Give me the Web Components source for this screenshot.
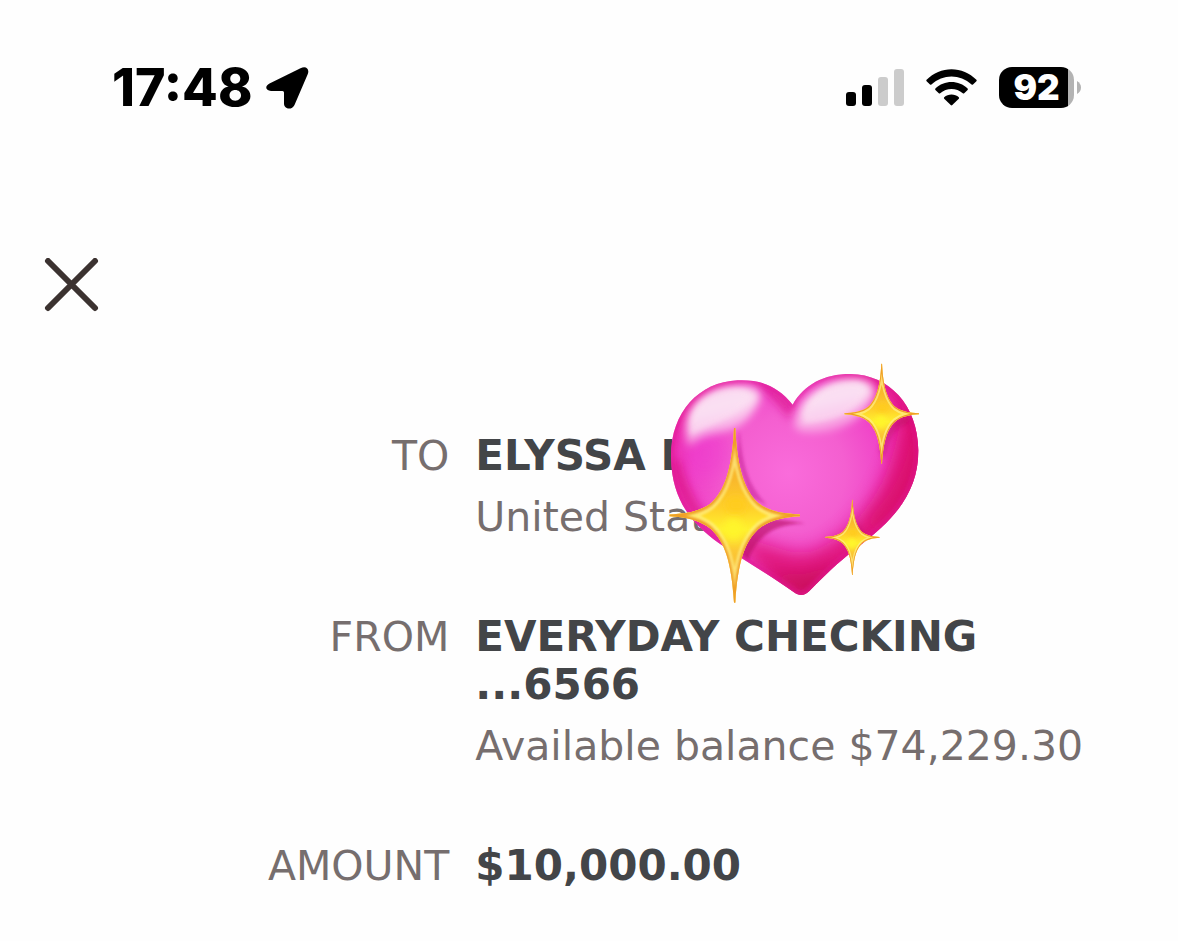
<!DOCTYPE html>
<html lang="en">
<head>
<meta charset="utf-8">
<meta name="viewport" content="width=device-width, initial-scale=1">
<title>Transfer details</title>
<style>
    body {
        margin: 0;
        background: #fefefe;
        color: #434548;
        font-family: "DejaVu Sans", Verdana, sans-serif;
    }
</style>
</head>
<body>

<transfer-screen>
    <status-bar slot="status" time="17:48" battery="92" signal="2"></status-bar>
    <close-button slot="nav"></close-button>
    <transfer-row label="TO">
        ELYSSA H
        <span slot="note">United States</span>
        <sparkle-heart slot="sticker"></sparkle-heart>
    </transfer-row>
    <transfer-row label="FROM">
        EVERYDAY CHECKING ...6566
        <span slot="note">Available balance $74,229.30</span>
    </transfer-row>
    <transfer-row label="AMOUNT">$10,000.00</transfer-row>
</transfer-screen>

<script>
class BaseElement extends HTMLElement{

    constructor(){
        super();
        this.attachShadow({ mode: "open" });
        const template = document.createElement("template");
        template.innerHTML = this.getTemplate();
        this.shadowRoot.appendChild(template.content.cloneNode(true));
    }
}

class StatusBar extends BaseElement{

    connectedCallback(){
        this.shadowRoot.getElementById("time").textContent = this.getAttribute("time");
        this.shadowRoot.getElementById("level").textContent = this.getAttribute("battery");

        // dim the bars above the current signal strength
        const signal = Number(this.getAttribute("signal"));
        this.shadowRoot.querySelectorAll("#bars rect").forEach((bar, i) => {
            bar.setAttribute("fill", i < signal ? "#000" : "#ccc");
        });
    }

    getTemplate(){
        return `
            <style>
                :host {
                    display: flex;
                    justify-content: space-between;
                    align-items: center;
                    height: 49px;
                    padding: 63px 97px 0 112px;
                    color: #000;
                    font-family: Inter, "Liberation Sans", sans-serif;
                }
                svg { display: block; }
                .left, .right, .battery { display: flex; align-items: center; }
                .left { gap: 14px; }
                .right { gap: 22px; }
                #time { font-size: 52px; line-height: 48px; font-weight: 800; }
                .battery { gap: 3px; }
                #level {
                    box-sizing: border-box;
                    width: 75px;
                    height: 41px;
                    border-radius: 13px;
                    background: linear-gradient(to right, #000 92%, #b3b3b3 92%);
                    color: #fff;
                    font-size: 35px;
                    line-height: 41px;
                    font-weight: 900;
                    text-align: center;
                }
            </style>

            <div class="left">
                <span id="time"></span>
                <svg width="43" height="44" viewBox="0 0 43 44" aria-hidden="true">
                    <path d="M3.500 17.500 34.500 2.200C40-.8 44 3 41.600 8.500L28.500 39C26 44.500 18 43.500 18 37.500V26.500Q18 25 16.500 25H5C-.5 25-1.500 20 3.500 17.500Z"/>
                </svg>
            </div>
            <div class="right">
                <svg id="bars" width="58" height="38" viewBox="0 0 58 38" aria-hidden="true">
                    <rect x="0" y="23" width="10" height="14" rx="3"/>
                    <rect x="16" y="16" width="10" height="21" rx="3"/>
                    <rect x="32" y="8" width="10" height="29" rx="3"/>
                    <rect x="48" y="0" width="10" height="37" rx="3"/>
                </svg>
                <svg width="51" height="38" viewBox="0 0 51 38" aria-hidden="true">
                    <path d="M.6 10.800C14-3.400 37-3.400 50.400 10.800Q51 11.500 50.400 12.200L47 15.500Q46.300 16 45.600 15.400C34 4.700 17 4.700 5.400 15.400Q4.700 16 4 15.500L.6 12.200Q0 11.500.6 10.800Z"/>
                    <path d="M9.400 19.500C18 10.800 33 10.800 41.600 19.500Q42.200 20.200 41.600 20.900L38.200 24.200Q37.500 24.800 36.800 24.200C30.500 18.500 20.500 18.500 14.200 24.200Q13.500 24.800 12.800 24.200L9.400 20.900Q8.800 20.200 9.400 19.500Z"/>
                    <path d="M18.200 28.300C22 24.700 29 24.700 32.800 28.300Q33.400 29 32.800 29.700L26.300 36.100Q25.500 36.700 24.700 36.100L18.200 29.700Q17.600 29 18.200 28.300Z"/>
                </svg>
                <div class="battery">
                    <span id="level"></span>
                    <svg width="4" height="13" viewBox="0 0 4 13" aria-hidden="true">
                        <path d="M0 0Q4 2.500 4 6.500T0 13Z" fill="#b3b3b3"/>
                    </svg>
                </div>
            </div>
        `;
    }
}

class CloseButton extends BaseElement{

    getTemplate(){
        return `
            <style>
                :host { display: block; }
                button {
                    display: block;
                    padding: 0;
                    border: 0;
                    background: none;
                    color: #3b3230;
                    cursor: pointer;
                }
                svg { display: block; }
            </style>

            <button type="button" aria-label="Close">
                <svg width="56" height="54" viewBox="0 0 56 54" fill="none" stroke="currentColor" stroke-width="6" stroke-linecap="round">
                    <path d="M4 3 51 50M51 3 4 50"/>
                </svg>
            </button>
        `;
    }
}

class TransferRow extends BaseElement{

    connectedCallback(){
        this.shadowRoot.getElementById("label").textContent = this.getAttribute("label");
        // rows without a note keep just the value line
        this.shadowRoot.getElementById("note").hidden = !this.querySelector("[slot=note]");
    }

    getTemplate(){
        return `
            <style>
                :host { display: block; }
                dl {
                    display: grid;
                    grid-template-columns: 8fr 13fr;
                    column-gap: 26px;
                    margin: 0;
                    font-size: 41px;
                    line-height: 48px;
                }
                dt { color: #766e6e; text-align: right; }
                dd { position: relative; margin: 0; font-size: 42px; font-weight: 700; }
                #note { margin-top: 13px; color: #766e6e; font-size: 41px; font-weight: 400; }
                /* the sticker lies over the value and its note */
                ::slotted([slot=sticker]) { position: absolute; left: 175px; top: -82px; }
            </style>

            <dl>
                <dt id="label"></dt>
                <dd>
                    <slot></slot>
                    <div id="note"><slot name="note"></slot></div>
                    <slot name="sticker"></slot>
                </dd>
            </dl>
        `;
    }
}

class SparkleHeart extends BaseElement{

    getTemplate(){
        return `
            <style>
                :host { display: block; width: 290px; height: 265px; }
                svg { display: block; width: 100%; height: 100%; }
            </style>

            <svg viewBox="0 0 870 795" role="img" aria-label="Sparkling heart">
                <defs>
                    <radialGradient id="body" gradientUnits="userSpaceOnUse" cx="415" cy="370" r="430">
                        <stop offset="0" stop-color="#fa6cdb"/>
                        <stop offset=".4" stop-color="#f45fd0"/>
                        <stop offset=".66" stop-color="#f045c8"/>
                        <stop offset=".86" stop-color="#ec2aa8"/>
                        <stop offset="1" stop-color="#dd1670"/>
                    </radialGradient>
                    <linearGradient id="gloss" x1="0" y1="0" x2=".3" y2="1">
                        <stop offset="0" stop-color="#f7c5e8"/>
                        <stop offset=".45" stop-color="#fce0f3"/>
                        <stop offset="1" stop-color="#fbc4ec" stop-opacity=".55"/>
                    </linearGradient>
                    <linearGradient id="gold" x1="0" y1="0" x2="0" y2="1">
                        <stop offset="0" stop-color="#f5a623"/>
                        <stop offset=".3" stop-color="#f9b92c"/>
                        <stop offset=".46" stop-color="#ffd02a"/>
                        <stop offset=".58" stop-color="#fff12e"/>
                        <stop offset=".7" stop-color="#fcc934"/>
                        <stop offset="1" stop-color="#efa02c"/>
                    </linearGradient>
                    <filter id="soft8" x="-30%" y="-30%" width="160%" height="160%"><feGaussianBlur stdDeviation="8"/></filter>
                    <filter id="soft12" x="-30%" y="-30%" width="160%" height="160%"><feGaussianBlur stdDeviation="13"/></filter>
                    <filter id="soft24" x="-40%" y="-40%" width="180%" height="180%"><feGaussianBlur stdDeviation="26"/></filter>
                    <filter id="soft2" x="-20%" y="-20%" width="140%" height="140%"><feGaussianBlur stdDeviation="1.500"/></filter>
                    <filter id="soft5" x="-60%" y="-60%" width="220%" height="220%"><feGaussianBlur stdDeviation="5"/></filter>
                    <path id="heart" d="M428 164C384 108 330 88 263 91C145 96 60 190 63 325C66 450 124 520 205 578C285 634 372 682 432 727C450 740 463 737 478 723C520 680 560 640 625 590C735 508 806 425 805 300C803 165 718 74 602 72C520 72 462 104 428 164Z"/>
                    <clipPath id="inside"><use href="#heart"/></clipPath>
                    <path id="star" d="M-1-100H1C4-52 16-28 36-14C53-4 76-2 100-1V1C76 2 53 5 36 16C16 30 5 52 1 100H-1C-5 52-16 30-36 16C-53 5-76 2-100 1V-1C-76-2-53-4-36-14C-16-28-4-52-1-100Z"/>
                    <clipPath id="star-inside"><use href="#star"/></clipPath>
                    <g id="sparkle">
                        <use href="#star" fill="url(#gold)"/>
                        <g clip-path="url(#star-inside)">
                            <use href="#star" fill="none" stroke="#fff08a" stroke-width="15" opacity=".7" filter="url(#soft2)"/>
                            <use href="#star" fill="none" stroke="#f0a028" stroke-width="6" filter="url(#soft2)"/>
                            <ellipse cx="2" cy="-12" rx="16" ry="9" fill="#ffcc1e" filter="url(#soft5)"/>
                            <ellipse cx="-2" cy="16" rx="15" ry="12" fill="#fff52c" filter="url(#soft5)"/>
                        </g>
                    </g>
                </defs>

                <use href="#heart" fill="url(#body)"/>
                <g clip-path="url(#inside)">
                    <!-- shading down the right side and towards the tip -->
                    <path d="M760 120C750 320 690 450 585 545C530 590 480 612 445 610C385 600 310 570 240 545L430 790L700 690L890 430V130Z" fill="#de1070" opacity=".8" filter="url(#soft24)"/>
                    <path d="M800 160C780 350 735 430 640 520L700 550L850 350Z" fill="#cf0b55" opacity=".4" filter="url(#soft24)"/>
                    <path d="M325 655C400 680 490 690 570 620L480 770Z" fill="#bd0c48" opacity=".6" filter="url(#soft24)"/>
                    <path d="M60 330C75 450 140 520 225 590L245 570C170 510 110 430 95 330Z" fill="#d8117c" opacity=".6" filter="url(#soft12)"/>
                    <!-- lobes and crease -->
                    <ellipse cx="165" cy="310" rx="75" ry="80" fill="#ed35d0" opacity=".4" filter="url(#soft24)"/>
                    <path d="M300 85C360 95 410 140 428 165L418 210C390 165 350 130 300 85Z" fill="#dc138d" opacity=".7" filter="url(#soft12)"/>
                    <use href="#heart" fill="none" stroke="#e01795" stroke-width="20" opacity=".6" filter="url(#soft8)"/>
                    <!-- highlights -->
                    <path d="M110 265C94 175 165 112 260 108C330 106 345 130 316 175C288 222 255 242 205 248C160 256 135 268 116 292Z" fill="url(#gloss)" filter="url(#soft12)"/>
                    <path d="M438 210C455 125 545 78 625 88C680 96 685 130 652 172C610 228 555 242 505 246C450 250 426 240 438 210Z" fill="url(#gloss)" filter="url(#soft12)"/>
                    <path d="M122 225C125 155 190 115 260 115C295 117 305 130 290 158C260 208 170 225 122 255Z" fill="#fbe2f3" opacity=".6" filter="url(#soft8)"/>
                    <path d="M458 195C480 130 550 92 620 97C650 103 650 125 630 155C590 205 520 215 463 220Z" fill="#fbe2f3" opacity=".6" filter="url(#soft8)"/>
                    <!-- shadows cast by the sparkles -->
                    <path d="M268 240C280 360 295 400 350 465L300 440L262 330Z" fill="#bb168a" opacity=".45" filter="url(#soft5)"/>
                    <path d="M465 520C380 522 325 550 295 630L270 610C285 560 330 508 380 508Z" fill="#b70c64" opacity=".6" filter="url(#soft5)"/>
                    <path d="M790 215C740 225 715 250 703 330L690 300C705 240 730 205 760 200Z" fill="#b90a5e" opacity=".5" filter="url(#soft8)"/>
                    <path d="M615 470C620 520 630 540 655 553L620 550Z" fill="#b90a5e" opacity=".4" filter="url(#soft8)"/>
                </g>

                <use href="#sparkle" transform="translate(254 496) scale(1.960 2.620)"/>
                <use href="#sparkle" transform="translate(695 191) scale(1.120 1.500)"/>
                <use href="#sparkle" transform="translate(607 562) scale(.820 1.130)"/>
            </svg>
        `;
    }
}

class TransferScreen extends BaseElement{

    getTemplate(){
        return `
            <style>
                :host { display: block; }
                nav { padding: 146px 44px 0; }
                main {
                    display: flex;
                    flex-direction: column;
                    gap: 72px;
                    padding: 120px 44px 36px;
                }
            </style>

            <slot name="status"></slot>
            <nav><slot name="nav"></slot></nav>
            <main><slot></slot></main>
        `;
    }
}

customElements.define("status-bar", StatusBar);
customElements.define("close-button", CloseButton);
customElements.define("transfer-row", TransferRow);
customElements.define("sparkle-heart", SparkleHeart);
customElements.define("transfer-screen", TransferScreen);
</script>
</body>
</html>
